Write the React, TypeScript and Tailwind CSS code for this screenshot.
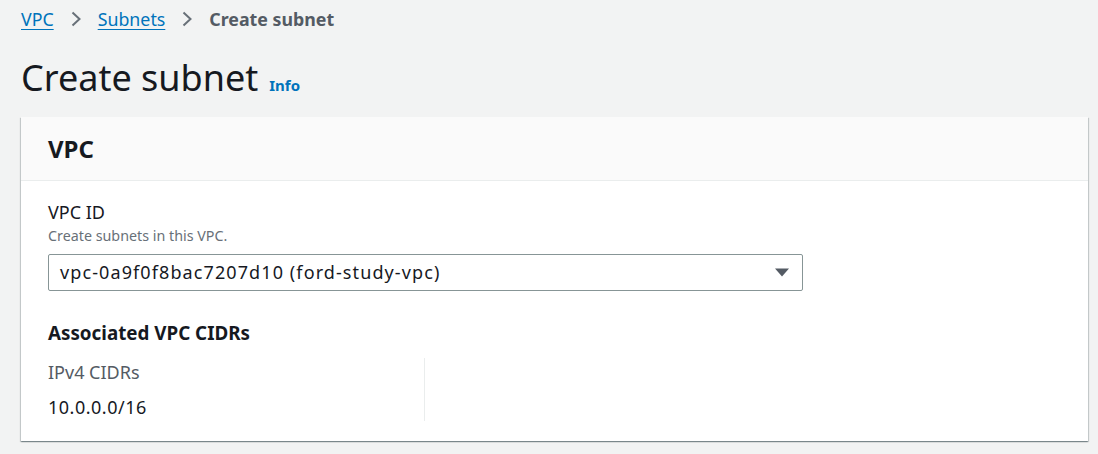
const font = { fontFamily: '"Noto Sans", "Open Sans", Arial, sans-serif' };

function Chevron() {
  return (
    <svg width="12" height="16" viewBox="0 0 12 16" className="shrink-0">
      <path d="M2.5 1.5 L9.5 8 L2.5 14.5" fill="none" stroke="#687078" strokeWidth="2" />
    </svg>
  );
}

export default function App() {
  return (
    <div className="min-h-[454px] w-full bg-[#f2f3f3] text-[#16191f]" style={font}>
      <div className="pl-[21px] pr-[10px] pt-[6px]">
        {/* breadcrumbs */}
        <nav className="flex items-center gap-[16px] text-[17.8px] leading-[26px]">
          <a className="text-[#0073bb] underline underline-offset-[3px]">VPC</a>
          <Chevron />
          <a className="text-[#0073bb] underline underline-offset-[3px]">Subnets</a>
          <Chevron />
          <span className="font-bold text-[#545b64]">Create subnet</span>
        </nav>

        {/* title */}
        <div className="mt-[26px] flex items-baseline gap-[11px]">
          <h1 className="text-[36px] leading-[40px] font-normal">Create subnet</h1>
          <a className="text-[15px] font-bold text-[#0073bb]">Info</a>
        </div>

        {/* panel */}
        <div className="mt-[19px] bg-white shadow-[0_1px_1px_0_rgba(0,28,36,0.3),1px_1px_1px_0_rgba(0,28,36,0.15),-1px_1px_1px_0_rgba(0,28,36,0.15)]">
          <div className="flex h-[64px] items-center border-b border-[#eaeded] bg-[#fafafa] px-[27px]">
            <h2 className="text-[24px] font-bold leading-[32px]">VPC</h2>
          </div>
          <div className="px-[27px] pt-[18px] pb-[20px]">
            <div className="text-[18px] leading-[26px]">VPC ID</div>
            <div className="text-[14.3px] leading-[22px] text-[#687078]">Create subnets in this VPC.</div>
            <div className="mt-[7px] flex h-[37px] w-[755px] items-center justify-between rounded-[2px] border border-[#879596] pl-[11px] pr-[13px]">
              <span className="text-[18px] tracking-[1.1px]">vpc-0a9f0f8bac7207d10 (ford-study-vpc)</span>
              <svg width="14" height="9" viewBox="0 0 14 9">
                <path d="M0 0.5 L14 0.5 L7 8.5 Z" fill="#545b64" />
              </svg>
            </div>

            <h3 className="mt-[28px] text-[18.8px] font-bold leading-[28px]">Associated VPC CIDRs</h3>
            <div className="mt-[11px] grid grid-cols-[377px_1fr]">
              <div className="border-r border-[#eaeded] py-[2px]">
                <div className="text-[18px] leading-[24px] text-[#545b64]">IPv4 CIDRs</div>
                <div className="mt-[11px] text-[18px] leading-[24px] tracking-[0.5px]">10.0.0.0/16</div>
              </div>
              <div />
            </div>
          </div>
        </div>
      </div>
    </div>
  );
}
